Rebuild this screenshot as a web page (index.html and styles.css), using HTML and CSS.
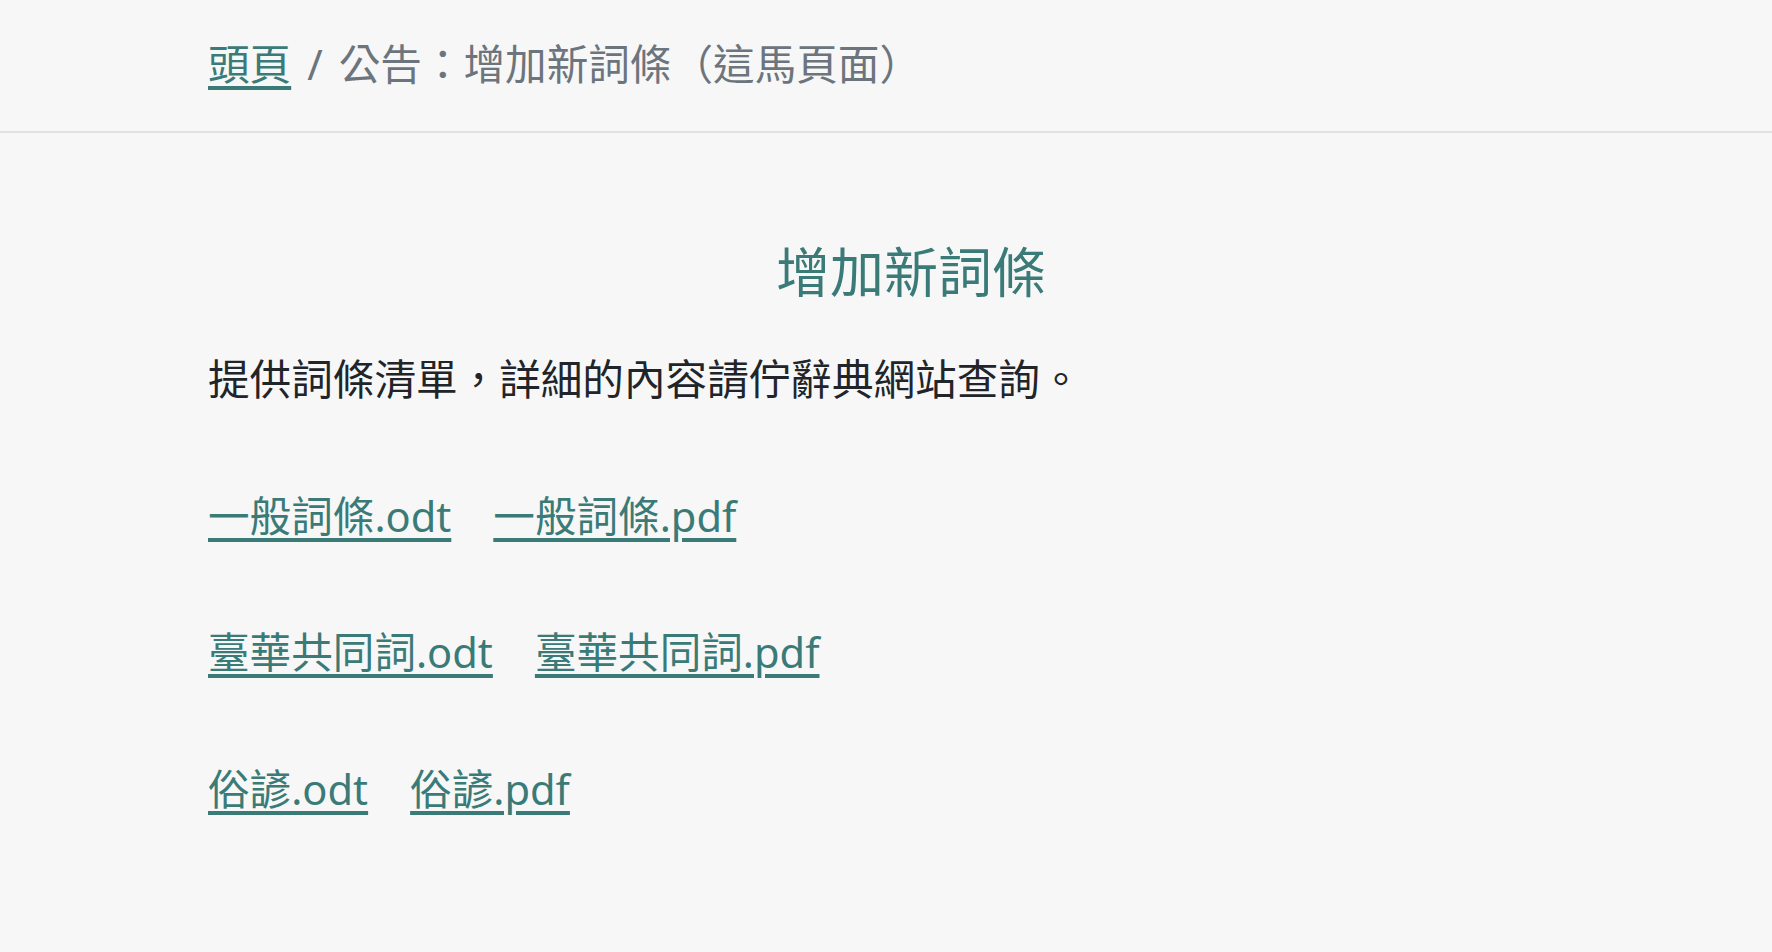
FILE: index.html
```html
<!DOCTYPE html>
<html lang="zh-Hant">
<head>
<meta charset="utf-8">
<title>增加新詞條</title>
<link rel="stylesheet" href="styles.css">
</head>
<body>
<header class="crumbs">
  <nav class="crumbs-inner">
    <a class="link" href="#">頭頁</a><span class="sep">/</span><span class="current">公告：增加新詞條（這馬頁面）</span>
  </nav>
</header>
<main class="content">
  <h1 class="title">增加新詞條</h1>
  <p class="intro">提供詞條清單，詳細的內容請佇辭典網站查詢。</p>
  <p class="files"><a class="link" href="#">一般詞條.odt</a><a class="link" href="#">一般詞條.pdf</a></p>
  <p class="files"><a class="link" href="#">臺華共同詞.odt</a><a class="link" href="#">臺華共同詞.pdf</a></p>
  <p class="files"><a class="link" href="#">俗諺.odt</a><a class="link" href="#">俗諺.pdf</a></p>
</main>
</body>
</html>
```
FILE: styles.css
```css
html, body {
  margin: 0;
  padding: 0;
  background: #f7f7f7;
}
body {
  font-family: "Noto Sans", "Noto Sans CJK TC", sans-serif;
  font-size: 41.6px;
  line-height: 1.48;
  color: #212529;
}
.link {
  color: #3a7b78;
  text-decoration: underline;
  text-decoration-thickness: 4px;
  text-underline-offset: 6px;
}
.crumbs {
  border-bottom: 2px solid #e1e1e5;
  padding: 34px 0 35px;
}
.crumbs-inner {
  padding-left: 208px;
  color: #6c757d;
  display: flex;
  align-items: center;
}
.sep {
  margin: 0 16px;
}
.content {
  padding: 107px 158px 0 208px;
}
.title {
  margin: 0;
  text-align: center;
  font-size: 54px;
  font-weight: 400;
  line-height: 1.2;
  color: #3a7b78;
}
.intro {
  margin: 45px 0 0;
}
.files {
  margin: 75px 0 0;
  display: flex;
  gap: 42px;
}
```
